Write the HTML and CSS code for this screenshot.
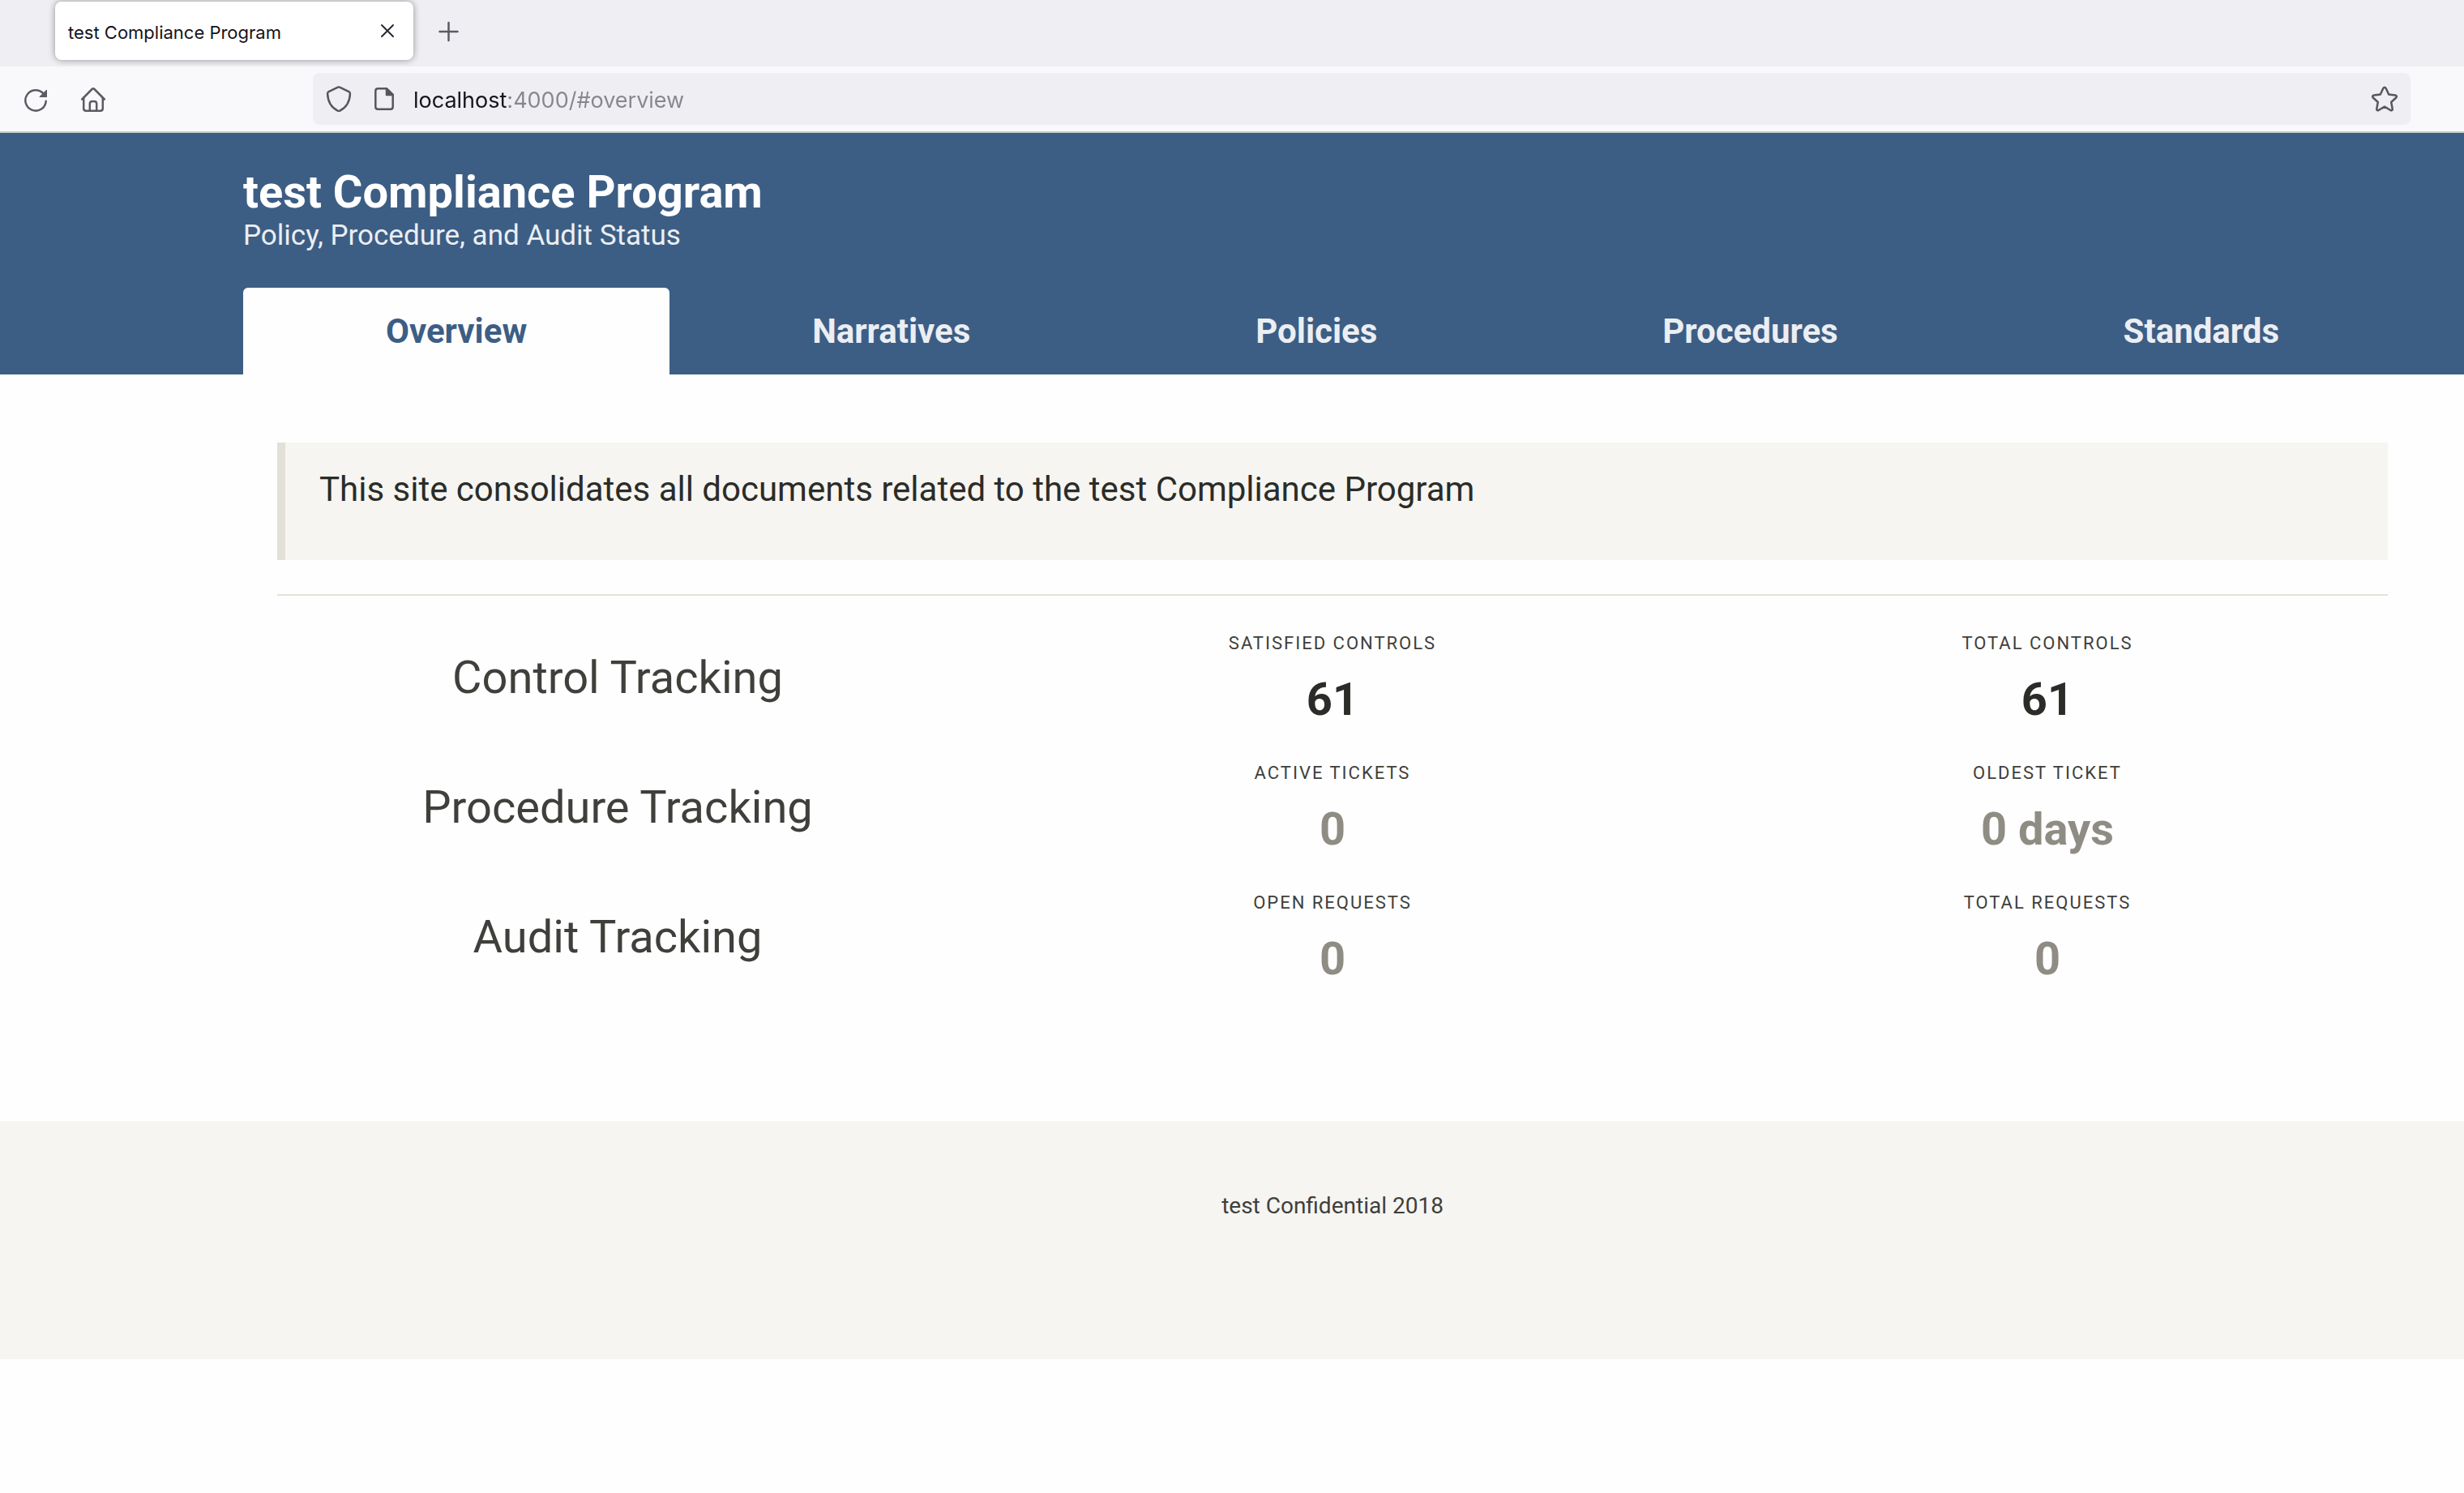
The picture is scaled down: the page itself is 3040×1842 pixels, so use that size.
FILE: index.html
```html
<!DOCTYPE html>
<html lang="en">
<head>
<meta charset="utf-8">
<meta name="viewport" content="width=device-width, initial-scale=1">
<title>test Compliance Program</title>
<link rel="stylesheet" href="styles.css">
</head>
<body>
<div class="browser">
  <div class="tabstrip">
    <div class="browser-tab">
      <span class="browser-tab-title">test Compliance Program</span>
      <button class="icon-button close-button" type="button" aria-label="Close tab">
        <svg width="32" height="32" viewBox="0 0 32 32" fill="none" stroke="#2b2a33" stroke-width="2" stroke-linecap="round"><path d="M9 9l14 14M23 9l-14 14"/></svg>
      </button>
    </div>
    <button class="icon-button" type="button" aria-label="New tab">
      <svg width="32" height="32" viewBox="0 0 32 32" fill="none" stroke="#5b5b66" stroke-width="2.500" stroke-linecap="round"><path d="M16.500 6v22M5.500 17h22"/></svg>
    </button>
  </div>
  <div class="toolbar">
    <div class="nav-buttons">
      <button class="icon-button" type="button" aria-label="Reload">
        <svg width="32" height="32" viewBox="0 0 32 32" fill="none" stroke="#5b5b66" stroke-width="2.500" stroke-linecap="round"><path d="M28.700 18.800A12.700 12.700 0 1 1 25.500 9.400"/><path d="M30 5.500q0-1.200-1-.4l-8.200 8q-.8.900.4.900H30z" fill="#5b5b66" stroke="none"/></svg>
      </button>
      <button class="icon-button" type="button" aria-label="Home">
        <svg width="32" height="32" viewBox="0 0 32 32" fill="none" stroke="#5b5b66" stroke-width="2.500" stroke-linecap="round" stroke-linejoin="round"><path d="M2.200 16.500L14.500 4q1.500-1.500 3 0L29.800 16.500"/><path d="M4.200 15v12.800q0 3 3 3h17.600q3 0 3-3V15"/><path d="M11.800 30.500v-8.500q0-3 3-3h2.400q3 0 3 3v8.500"/></svg>
      </button>
    </div>
    <div class="urlbar">
      <svg width="32" height="32" viewBox="0 0 32 32" fill="none" stroke="#56565d" stroke-width="2.500" stroke-linejoin="round" aria-hidden="true"><path d="M14.900 1.700q1.100-.6 2.200 0l11.400 5.400q1.500.8 1.400 2.700C29.500 20 25.500 26.500 17.300 30.700q-1.300.6-2.600 0C6.500 26.500 2.500 20 2.100 9.800q-.1-1.900 1.400-2.700z"/></svg>
      <svg width="32" height="32" viewBox="0 0 32 32" fill="none" stroke="#56565d" stroke-width="2.500" stroke-linejoin="round" aria-hidden="true"><path d="M8.300 3.300h10.700l7.700 7.700v14.700q0 3-3 3H8.300q-3 0-3-3V6.300q0-3 3-3z"/><path d="M19 3.300v7.700h7.700z" fill="#56565d"/></svg>
      <input class="url-input" type="text" value="localhost:4000/#overview" aria-label="Address" spellcheck="false">
      <button class="icon-button" type="button" aria-label="Bookmark this page">
        <svg width="32" height="32" viewBox="0 0 32 32" fill="none" stroke="#56565d" stroke-width="2.500" stroke-linejoin="round"><path d="M14.300 3Q16 .5 17.700 3l3.500 7.600 8 1q2.700.5 1 2.900l-6 5.500 1.500 8.300q.2 2.700-2.300 1.700L16 25.700 8.600 30q-2.500 1-2.300-1.700L7.800 20l-6-5.500q-1.700-2.400 1-2.900l8-1z"/></svg>
      </button>
    </div>
  </div>
</div>

<header class="hero">
  <h1 class="hero-title">test Compliance Program</h1>
  <p class="hero-subtitle">Policy, Procedure, and Audit Status</p>
  <nav class="tabs" aria-label="Sections">
    <a class="tab tab-active" href="#overview" aria-current="page">Overview</a>
    <a class="tab" href="#narratives">Narratives</a>
    <a class="tab" href="#policies">Policies</a>
    <a class="tab" href="#procedures">Procedures</a>
    <a class="tab" href="#standards">Standards</a>
  </nav>
</header>

<main class="content" id="overview">
  <blockquote class="intro">This site consolidates all documents related to the test Compliance Program</blockquote>
  <hr class="divider">
  <div class="tracking">
    <section class="tracking-row">
      <h2 class="tracking-name">Control Tracking</h2>
      <div class="stat"><p class="stat-label">Satisfied Controls</p><p class="stat-value">61</p></div>
      <div class="stat"><p class="stat-label">Total Controls</p><p class="stat-value">61</p></div>
    </section>
    <section class="tracking-row">
      <h2 class="tracking-name">Procedure Tracking</h2>
      <div class="stat"><p class="stat-label">Active Tickets</p><p class="stat-value stat-muted">0</p></div>
      <div class="stat"><p class="stat-label">Oldest Ticket</p><p class="stat-value stat-muted">0 days</p></div>
    </section>
    <section class="tracking-row">
      <h2 class="tracking-name">Audit Tracking</h2>
      <div class="stat"><p class="stat-label">Open Requests</p><p class="stat-value stat-muted">0</p></div>
      <div class="stat"><p class="stat-label">Total Requests</p><p class="stat-value stat-muted">0</p></div>
    </section>
  </div>
</main>

<footer class="footer">test Confidential 2018</footer>
</body>
</html>
```

FILE: styles.css
```css
* {
  box-sizing: border-box;
}

body {
  margin: 0;
  background: #fefefe;
  color: #3f3f3b;
  font-family: Roboto, "Liberation Sans", sans-serif;
  font-size: 28px;
  line-height: 42px;
}

h1,
h2,
p,
blockquote {
  margin: 0;
}

/* Browser window */

.browser {
  font-family: Inter, "Liberation Sans", sans-serif;
  border-bottom: 2px solid #cccccc;
}

.icon-button {
  display: flex;
  padding: 0;
  border: 0;
  background: none;
}

.tabstrip {
  display: flex;
  align-items: center;
  gap: 27px;
  padding: 2px 0 8px 68px;
  background: #efeef3;
}

.browser-tab {
  display: flex;
  align-items: center;
  justify-content: space-between;
  width: 442px;
  height: 72px;
  padding: 0 16px;
  border-radius: 8px;
  background: #ffffff;
  box-shadow: 0 0 8px rgba(0, 0, 0, 0.4);
}

.browser-tab-title {
  padding-top: 4px;
  color: #15141a;
  font-size: 22px;
}

.toolbar {
  display: flex;
  align-items: center;
  padding: 8px 66px 8px 28px;
  background: #f9f9fb;
}

.nav-buttons {
  display: flex;
  gap: 39px;
  width: 358px;
}

.urlbar {
  display: flex;
  flex: 1;
  align-items: center;
  gap: 24px;
  height: 64px;
  padding: 0 16px;
  border-radius: 8px;
  background: #efeef3;
}

/* The host is dark and the rest of the address grey */
.url-input {
  flex: 1;
  height: 40px;
  margin-left: -4px;
  padding: 2px 0 0;
  border: 0;
  background: linear-gradient(to right, #15141a 117px, #87868c 117px);
  background-clip: text;
  -webkit-background-clip: text;
  color: transparent;
  font: 27px Inter, "Liberation Sans", sans-serif;
}

/* Page header */

.hero {
  padding: 42px 52px 0 300px;
  background: #3d5e84;
  color: #ffffff;
}

.hero-title {
  font-size: 56px;
  font-weight: 700;
  line-height: 63px;
}

.hero-subtitle {
  color: #ebeef3;
  font-size: 35px;
  line-height: 44px;
}

.tabs {
  display: flex;
  margin-top: 42px;
}

.tab {
  flex: 1 0 auto;
  padding: 22px 42px;
  border-radius: 6px 6px 0 0;
  color: #ebeef3;
  font-size: 42px;
  font-weight: 700;
  line-height: 63px;
  text-align: center;
  text-decoration: none;
}

.tab-active {
  background: #fefefe;
  color: #3d5e84;
}

/* Overview */

.content {
  padding: 84px 94px 168px 342px;
}

.intro {
  padding: 26px 42px 56px;
  border-left: 10px solid #e3e0d7;
  background: #f6f5f1;
  color: #2b2c28;
  font-size: 42px;
  line-height: 63px;
}

.divider {
  height: 2px;
  margin: 42px 0;
  border: 0;
  background: #e3e2d8;
}

.tracking {
  display: grid;
  gap: 42px;
  margin: 0 -21px;
}

.tracking-row {
  display: grid;
  grid-template-columns: repeat(3, 1fr);
  align-items: center;
  text-align: center;
}

.tracking-name {
  font-size: 56px;
  font-weight: 400;
  line-height: 63px;
}

.stat-label {
  margin-bottom: 22px;
  font-size: 22px;
  letter-spacing: 2px;
  line-height: 33px;
  text-transform: uppercase;
}

.stat-value {
  color: #2b2c28;
  font-size: 56px;
  font-weight: 700;
  line-height: 63px;
}

.stat-muted {
  color: #8f8c84;
}

.footer {
  padding: 84px 52px 168px 300px;
  background: #f6f5f1;
  text-align: center;
}
```
